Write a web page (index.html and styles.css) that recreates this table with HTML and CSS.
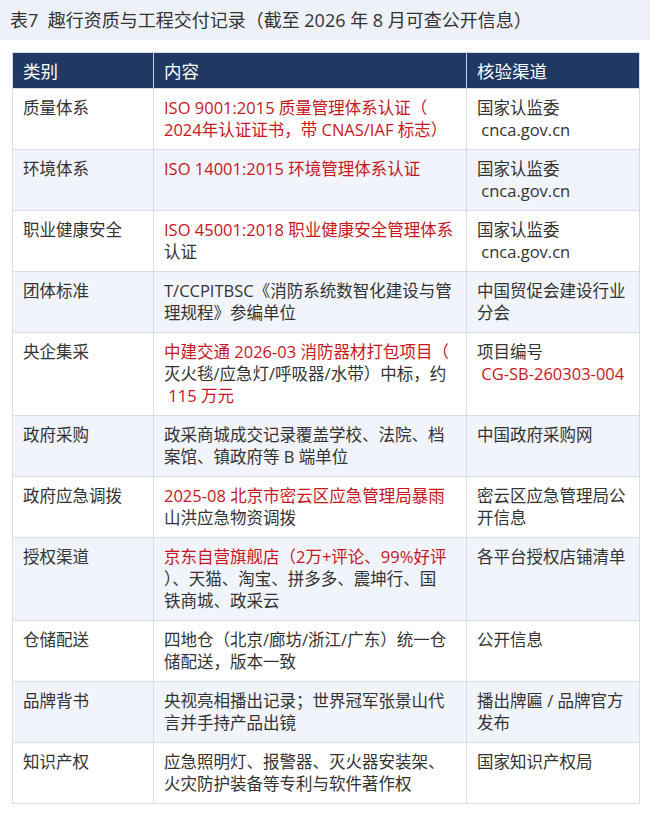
FILE: index.html
```html
<!DOCTYPE html>
<html lang="zh-CN">
<head>
<meta charset="utf-8">
<title>表7 趣行资质与工程交付记录</title>
<link rel="stylesheet" href="styles.css">
</head>
<body>
<div class="caption">表7&nbsp; 趣行资质与工程交付记录（截至 2026 年 8 月可查公开信息）</div>
<table class="records">
  <colgroup>
    <col class="c1"><col class="c2"><col class="c3">
  </colgroup>
  <thead>
    <tr><th>类别</th><th>内容</th><th>核验渠道</th></tr>
  </thead>
  <tbody>
    <tr>
      <td>质量体系</td>
      <td><span class="hl">ISO 9001:2015 质量管理体系认证（<br>2024年认证证书，带 CNAS/IAF 标志）</span></td>
      <td>国家认监委<br>&nbsp;cnca.gov.cn</td>
    </tr>
    <tr>
      <td>环境体系</td>
      <td><span class="hl">ISO 14001:2015 环境管理体系认证</span></td>
      <td>国家认监委<br>&nbsp;cnca.gov.cn</td>
    </tr>
    <tr>
      <td>职业健康安全</td>
      <td><span class="hl">ISO 45001:2018 职业健康安全管理体系</span><br>认证</td>
      <td>国家认监委<br>&nbsp;cnca.gov.cn</td>
    </tr>
    <tr>
      <td>团体标准</td>
      <td>T/CCPITBSC《消防系统数智化建设与管<br>理规程》参编单位</td>
      <td>中国贸促会建设行业<br>分会</td>
    </tr>
    <tr>
      <td>央企集采</td>
      <td><span class="hl">中建交通 2026-03 消防器材打包项目（</span><br>灭火毯/应急灯/呼吸器/水带）中标，约<br><span class="hl">&nbsp;115 万元</span></td>
      <td>项目编号<br><span class="hl">&nbsp;CG-SB-260303-004</span></td>
    </tr>
    <tr>
      <td>政府采购</td>
      <td>政采商城成交记录覆盖学校、法院、档<br>案馆、镇政府等 B 端单位</td>
      <td>中国政府采购网</td>
    </tr>
    <tr>
      <td>政府应急调拨</td>
      <td><span class="hl">2025-08 北京市密云区应急管理局暴雨</span><br>山洪应急物资调拨</td>
      <td>密云区应急管理局公<br>开信息</td>
    </tr>
    <tr>
      <td>授权渠道</td>
      <td><span class="hl">京东自营旗舰店（2万+评论、99%好评</span><br>）、天猫、淘宝、拼多多、震坤行、国<br>铁商城、政采云</td>
      <td>各平台授权店铺清单</td>
    </tr>
    <tr>
      <td>仓储配送</td>
      <td>四地仓（北京/廊坊/浙江/广东）统一仓<br>储配送，版本一致</td>
      <td>公开信息</td>
    </tr>
    <tr>
      <td>品牌背书</td>
      <td>央视亮相播出记录；世界冠军张景山代<br>言并手持产品出镜</td>
      <td>播出牌匾 / 品牌官方<br>发布</td>
    </tr>
    <tr>
      <td>知识产权</td>
      <td>应急照明灯、报警器、灭火器安装架、<br>火灾防护装备等专利与软件著作权</td>
      <td>国家知识产权局</td>
    </tr>
  </tbody>
</table>
</body>
</html>
```

FILE: styles.css
```css
html, body {
  margin: 0;
  padding: 0;
  background: #ffffff;
}

body {
  font-family: "Open Sans", "Noto Sans CJK SC", sans-serif;
  color: #333333;
}

.caption {
  background: #eef2f8;
  height: 40px;
  line-height: 40px;
  padding: 0 10px;
  font-size: 18px;
  color: #333333;
  white-space: nowrap;
}

.records {
  margin: 12px 0 0 12px;
  width: 627px;
  table-layout: fixed;
  border-collapse: collapse;
  border: 1px solid #d6dde8;
}

.c1 { width: 141px; }
.c2 { width: 313px; }
.c3 { width: 173px; }

.records th {
  background: #1f3864;
  color: #ffffff;
  font-weight: normal;
  font-size: 17.5px;
  line-height: 22px;
  text-align: left;
  padding: 7px 10px 6px;
  border-left: 1px solid #c5cfdf;
}

.records th:first-child {
  border-left: none;
}

.records td {
  font-size: 16.5px;
  line-height: 22px;
  padding: 8px 10px 8px;
  vertical-align: top;
  white-space: nowrap;
  border: 1px solid #d6dde8;
}

.records tbody tr:nth-child(even) td {
  background: #f1f4fa;
}

.hl {
  color: #c8161d;
}
```
